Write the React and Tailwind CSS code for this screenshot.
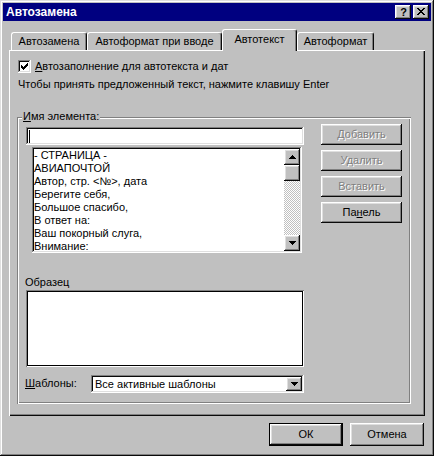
import React from 'react';

const raised = 'shadow-[inset_-1px_-1px_#0a0a0a,inset_1px_1px_#ffffff,inset_-2px_-2px_#808080,inset_2px_2px_#dfdfdf]';
const sunken = 'shadow-[inset_-1px_-1px_#ffffff,inset_1px_1px_#808080,inset_-2px_-2px_#dfdfdf,inset_2px_2px_#0a0a0a]';

const items = [
  '- СТРАНИЦА -',
  'АВИАПОЧТОЙ',
  'Автор, стр. <№>, дата',
  'Берегите себя,',
  'Большое спасибо,',
  'В ответ на:',
  'Ваш покорный слуга,',
  'Внимание:',
];

function Arrow({ up }) {
  const rows = up ? [[3, 1], [2, 3], [1, 5], [0, 7]] : [[0, 7], [1, 5], [2, 3], [3, 1]];
  return (
    <svg width="7" height="4" viewBox="0 0 7 4" shapeRendering="crispEdges">
      {rows.map(([x, w], i) => <rect key={i} x={x} y={i} width={w} height="1" fill="#000" />)}
    </svg>
  );
}

function Tab({ label, active, w }) {
  return (
    <div
      className={`${w} ${active ? 'h-[22px] -mb-[1px] relative z-10' : 'h-[18px]'} bg-[#c0c0c0] border-t border-l border-white border-r border-r-[#0a0a0a] rounded-t-[3px] shadow-[inset_-1px_0_#808080] flex items-center justify-center ${active ? 'pb-[2px]' : ''}`}
    >
      {label}
    </div>
  );
}

function Btn({ children, disabled, className = '' }) {
  return (
    <div className={`h-[21px] w-[81px] bg-[#c0c0c0] ${raised} flex items-center justify-center ${disabled ? 'text-[#808080] [text-shadow:1px_1px_#ffffff]' : 'text-black'} ${className}`}>
      {children}
    </div>
  );
}

export default function App() {
  return (
    <div className="w-[434px] h-[456px] bg-[#c0c0c0] p-[3px] flex flex-col text-[11px] leading-[13px] text-black shadow-[inset_-1px_-1px_#0a0a0a,inset_1px_1px_#dfdfdf,inset_-2px_-2px_#808080,inset_2px_2px_#ffffff]" style={{ fontFamily: '"Liberation Sans", Arial, sans-serif' }}>
      {/* Title bar */}
      <div className="h-[18px] bg-[#000080] flex items-center justify-between pl-[3px] pr-[2px]">
        <span className="text-white font-bold text-[12px]">Автозамена</span>
        <div className="flex gap-[2px]">
          <div className={`w-[16px] h-[14px] bg-[#c0c0c0] ${raised} flex items-center justify-center font-bold text-[11px] leading-none pl-[1px]`}>?</div>
          <div className={`w-[16px] h-[14px] bg-[#c0c0c0] ${raised} flex items-center justify-center`}>
            <svg width="8" height="7" viewBox="0 0 8 7" shapeRendering="crispEdges" className="-mt-[1px]">
              {[[0, 2, 6, 2], [1, 2, 5, 2], [2, 4], [3, 2], [2, 4], [1, 2, 5, 2], [0, 2, 6, 2]].map((r, i) => (
                <g key={i}>
                  <rect x={r[0]} y={i} width={r[1]} height="1" fill="#000" />
                  {r.length > 2 && <rect x={r[2]} y={i} width={r[3]} height="1" fill="#000" />}
                </g>
              ))}
            </svg>
          </div>
        </div>
      </div>

      {/* Tabs */}
      <div className="mt-[8px] h-[21px] flex items-end pl-[8px]">
        <Tab w="w-[76px]" label="Автозамена" />
        <Tab w="w-[135px]" label="Автоформат при вводе" />
        <Tab w="w-[75px]" label="Автотекст" active />
        <Tab w="w-[77px]" label="Автоформат" />
      </div>

      {/* Panel */}
      <div className="mx-[6px] h-[366px] bg-[#c0c0c0] shadow-[inset_1px_1px_#ffffff,inset_-1px_-1px_#0a0a0a,inset_-2px_-2px_#808080] pt-[10px] pl-[8px]">
        <div className="h-[13px] ml-[1px] flex items-center">
          <div className={`w-[13px] h-[13px] bg-white ${sunken} flex items-center justify-center`}>
            <svg width="7" height="7" viewBox="0 0 7 7" shapeRendering="crispEdges">
              {[[2, 3], [3, 3], [4, 3], [3, 3], [2, 3], [1, 3], [0, 3]].map(([y, h], i) => (
                <rect key={i} x={i} y={y} width="1" height={h} fill="#000" />
              ))}
            </svg>
          </div>
          <span className="ml-[4px]"><u className="underline-offset-1">А</u>втозаполнение для автотекста и дат</span>
        </div>
        <div className="h-[13px] ml-[1px] mt-[5px]">Чтобы принять предложенный текст, нажмите клавишу Enter</div>

        {/* Group box */}
        <div className="relative mt-[26px] w-[394px] h-[287px] shadow-[inset_1px_1px_#808080,inset_-1px_-1px_#ffffff,inset_2px_2px_#ffffff,inset_-2px_-2px_#808080]">
          <span className="absolute left-[5px] -top-[7px] bg-[#c0c0c0] px-[1px]"><u className="underline-offset-1">И</u>мя элемента:</span>

          <div className="flex pt-[7px]">
            <div className="pl-[9px] pt-[3px]">
              <div className={`w-[278px] h-[18px] bg-white ${sunken} flex items-center pl-[3px]`}>
                <div className="w-[1px] h-[13px] bg-black" />
              </div>
              <div className={`ml-[6px] mt-[2px] w-[270px] h-[106px] bg-white ${sunken} p-[2px] flex`}>
                <div className="flex-1 overflow-hidden pt-[0px]">
                  {items.map((t) => (
                    <div key={t} className="h-[13px] whitespace-nowrap">{t}</div>
                  ))}
                </div>
                <div className="w-[16px] flex flex-col">
                  <div className={`h-[16px] bg-[#c0c0c0] ${raised} flex items-center justify-center`}><Arrow up /></div>
                  <div className={`h-[16px] bg-[#c0c0c0] ${raised}`} />
                  <div className="flex-1 bg-[repeating-conic-gradient(#c0c0c0_0_25%,#ffffff_0_50%)] bg-[length:2px_2px]" />
                  <div className={`h-[16px] bg-[#c0c0c0] ${raised} flex items-center justify-center`}><Arrow /></div>
                </div>
              </div>
            </div>
            <div className="ml-[17px] flex flex-col gap-[5px]">
              <Btn disabled>Добавить</Btn>
              <Btn disabled>Удалить</Btn>
              <Btn disabled>Вставить</Btn>
              <Btn>Па<u className="underline-offset-1">н</u>ель</Btn>
            </div>
          </div>

          <div className="pl-[8px] mt-[23px] h-[13px]">Образец</div>
          <div className="ml-[9px] mt-[1px] w-[278px] h-[77px] bg-white shadow-[inset_1px_1px_#808080,inset_-1px_-1px_#ffffff,inset_2px_2px_#000000,inset_-2px_-2px_#000000]" />

          <div className="mt-[8px] flex items-center">
            <span className="pl-[8px] w-[74px] -mt-[2px]"><u className="underline-offset-1">Ш</u>аблоны:</span>
            <div className={`w-[213px] h-[18px] bg-white ${sunken} flex items-center p-[2px]`}>
              <span className="flex-1 pl-[2px]">Все активные шаблоны</span>
              <div className={`w-[16px] h-[14px] bg-[#c0c0c0] ${raised} flex items-center justify-center`}><Arrow /></div>
            </div>
          </div>
        </div>
      </div>

      {/* Bottom buttons */}
      <div className="mt-[7px] flex justify-end gap-[7px] pr-[7px]">
        <div className="w-[74px] h-[23px] border border-black">
          <div className={`w-full h-full bg-[#c0c0c0] ${raised} flex items-center justify-center`}>ОК</div>
        </div>
        <div className={`w-[74px] h-[23px] bg-[#c0c0c0] ${raised} flex items-center justify-center`}>Отмена</div>
      </div>
    </div>
  );
}
